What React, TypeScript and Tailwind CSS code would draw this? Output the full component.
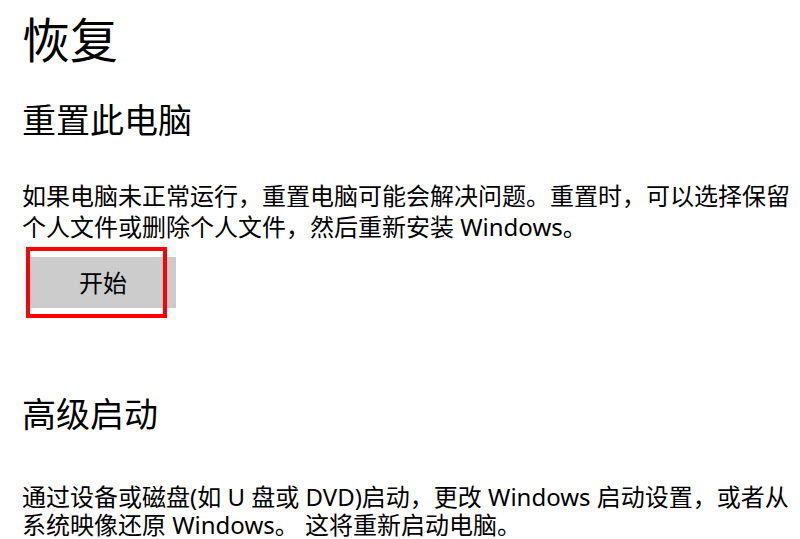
export default function App() {
  return (
    <div className="min-h-screen bg-white pl-[22px] text-black font-['Segoe_UI','Noto_Sans','Noto_Sans_CJK_SC',sans-serif]">
      <h1 className="pt-[12px] text-[48px] leading-[56px] font-normal">恢复</h1>

      <h2 className="mt-[30px] text-[34px] leading-[44px] font-normal">重置此电脑</h2>
      <p className="mt-[38px] text-[24px] leading-[31px] whitespace-nowrap">
        如果电脑未正常运行，重置电脑可能会解决问题。重置时，可以选择保留
        <br />
        个人文件或删除个人文件，然后重新安装 Windows。
      </p>

      <div className="relative mt-[15px] ml-[8px] w-[146px]">
        <button className="flex h-[51px] w-[146px] items-center justify-center bg-[#cccccc] text-[24px] text-black">
          开始
        </button>
        {/* red highlight drawn over the button */}
        <div className="pointer-events-none absolute left-[-4px] top-[-10px] h-[71px] w-[141px] border-[4px] border-[#ff0000]" />
      </div>

      <h2 className="mt-[84px] text-[34px] leading-[44px] font-normal">高级启动</h2>
      <p className="mt-[47px] text-[24px] leading-[28px] whitespace-nowrap">
        通过设备或磁盘(如 U 盘或 DVD)启动，更改 Windows 启动设置，或者从
        <br />
        系统映像还原 Windows。 这将重新启动电脑。
      </p>
    </div>
  )
}
